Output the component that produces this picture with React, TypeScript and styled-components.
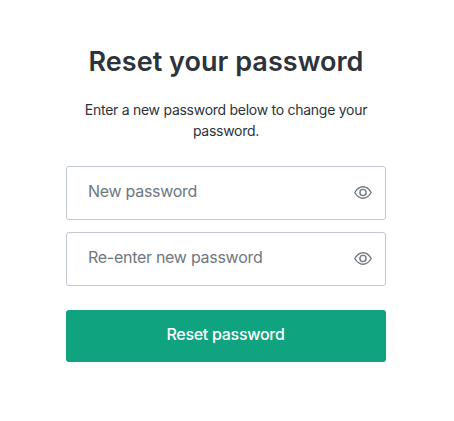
import React from "react";
import styled, { createGlobalStyle } from "styled-components";

const GlobalStyle = createGlobalStyle`
  * { box-sizing: border-box; }
  body { margin: 0; background: #fff; font-family: "Inter", sans-serif; }
`;

const Page = styled.main`
  width: 454px;
  height: 421px;
  padding: 41px 68px 0 66px;
`;

const Title = styled.h1`
  margin: 0 -1px;
  height: 42px;
  line-height: 42px;
  font-size: 27px;
  font-weight: 600;
  letter-spacing: 0.04px;
  color: #2d333a;
  text-align: center;
  white-space: nowrap;
`;

const Description = styled.p`
  margin: 16px 0 0;
  height: 42px;
  line-height: 21px;
  font-size: 14px;
  letter-spacing: -0.27px;
  color: #2d333a;
  text-align: center;
`;

const Form = styled.form`
  margin-top: 25px;
`;

const Field = styled.label`
  display: flex;
  align-items: center;
  justify-content: space-between;
  height: 54px;
  margin-bottom: 12px;
  padding: 0 13px 0 21px;
  border: 1px solid #c2c8d0;
  border-radius: 3px;
  font-size: 16px;
  letter-spacing: -0.28px;
  color: #6f7780;
`;

const FieldLabel = styled.span`
  padding-bottom: 5px;
`;

const Submit = styled.button`
  display: block;
  width: 100%;
  height: 52px;
  margin: 24px 0 0;
  padding: 0 1px 5px 0;
  border: 0;
  border-radius: 3px;
  background: #10a37f;
  color: #fff;
  font: 500 16px "Inter", sans-serif;
  letter-spacing: -0.28px;
`;

const EyeShape = styled.svg`
  display: block;
  margin-top: -1px;
`;

const EyeIcon = () => (
  <EyeShape width="18" height="13" viewBox="0 0 18 13" fill="none" stroke="#6f7780" strokeWidth="1.4">
    <path d="M.8 6.5C3 2.8 5.7.8 9 .8S15 2.8 17.2 6.5C15 10.2 12.3 12.2 9 12.2S3 10.2.8 6.5Z" />
    <circle cx="9" cy="6.5" r="3.1" />
  </EyeShape>
);

export default function App() {
  return (
    <Page>
      <GlobalStyle />
      <Title>Reset your password</Title>
      <Description>Enter a new password below to change your password.</Description>
      <Form>
        <Field><FieldLabel>New password</FieldLabel><EyeIcon /></Field>
        <Field><FieldLabel>Re-enter new password</FieldLabel><EyeIcon /></Field>
        <Submit type="button">Reset password</Submit>
      </Form>
    </Page>
  );
}
